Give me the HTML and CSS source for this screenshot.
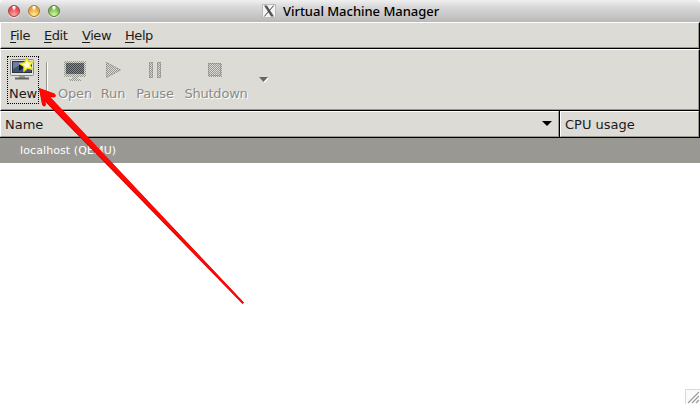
FILE: index.html
```
<!DOCTYPE html>
<html lang="en">
<head>
<meta charset="utf-8">
<title>Virtual Machine Manager</title>
<link rel="stylesheet" href="styles.css">
</head>
<body>
<div class="window">
  <header class="titlebar">
    <div class="lights"><span class="light red"></span><span class="light amber"></span><span class="light green"></span></div>
    <div class="title">
      <svg class="xlogo" width="14" height="14" viewBox="0 0 14 14"><rect x=".5" y=".5" width="13" height="13" fill="#f4f4f4" stroke="#bbb"/><path d="M2 1.500h3l7 11H9z" fill="#555"/><path d="M11.700 1.500 2.300 12.500" stroke="#444" stroke-width="1"/></svg>
      <span class="title-text">Virtual Machine Manager</span>
    </div>
  </header>
  <nav class="menubar">
    <span class="menu file"><u>F</u>ile</span><span class="menu edit"><u>E</u>dit</span><span class="menu view"><u>V</u>iew</span><span class="menu help"><u>H</u>elp</span>
  </nav>
  <div class="toolbar">
    <div class="tool new">
      <svg width="28" height="26" viewBox="0 0 28 26"><rect x="1.500" y="3.500" width="23" height="16" rx="1" fill="#e4e4e0" stroke="#8a8b86"/><rect x="3.500" y="5.500" width="19" height="11" fill="#3d5478" stroke="#2c323b"/><path d="M4 6h12L4 13z" fill="#6b809e"/><path d="M10 8l5 3.500-5 3.500z" fill="#17191c"/><path d="M10 20h6v2h-6z" fill="#9a9b96"/><path d="M6 22.500h14" stroke="#62635e" stroke-width="2"/><path d="M17.500 1.500l2.300 4.300 5-.5-3.400 3.900 2.200 4.600-4.900-1.600-4 3.500.2-5.200-4.500-2.700 5.300-1.300z" fill="#fff45c" stroke="#e8d800"/><path d="M18 5l1 2.500 2.500.2-2 1.800.6 2.200-2.300-1-1.800 1.200.2-2.200-1.800-1.400 2.500-.5z" fill="#fffde0"/></svg>
      <span>New</span>
    </div>
    <div class="separator"></div>
    <div class="tool disabled open">
      <svg width="28" height="26" viewBox="0 0 28 26"><defs><pattern id="dots" width="2" height="2" patternUnits="userSpaceOnUse"><path d="M0 0h1v1H0zM1 1h1v1H1z" fill="#3e4448"/></pattern><pattern id="pale" width="2" height="2" patternUnits="userSpaceOnUse"><path d="M0 0h1v1H0zM1 1h1v1H1z" fill="#96978f"/></pattern></defs><rect x="3" y="4" width="22" height="16" rx="1" fill="url(#pale)"/><rect x="5" y="6" width="18" height="11" fill="#858b8e"/><rect x="5" y="6" width="18" height="11" fill="url(#dots)"/><path d="M11 20h6v2h3v2H8v-2h3z" fill="url(#pale)"/></svg>
      <span>Open</span>
    </div>
    <div class="tool disabled run">
      <svg width="28" height="26" viewBox="0 0 28 26"><path d="M7 5l15 8-15 8z" fill="url(#pale)"/><path d="M7.500 5.500l14 7.500-14 7.500z" fill="none" stroke="#85867f" stroke-dasharray="1 1"/></svg>
      <span>Run</span>
    </div>
    <div class="tool disabled pause">
      <svg width="28" height="26" viewBox="0 0 28 26"><path d="M8 5h4v16H8zM16 5h4v16h-4z" fill="url(#pale)"/><path d="M8.500 5.500h3v15h-3zM16.500 5.500h3v15h-3z" fill="none" stroke="#85867f" stroke-dasharray="1 1"/></svg>
      <span>Pause</span>
    </div>
    <div class="tool disabled shutdown">
      <svg width="28" height="26" viewBox="0 0 28 26"><path d="M6 6h14v14H6z" fill="url(#pale)"/><path d="M6.500 6.500h12v12h-12z" fill="none" stroke="#85867f" stroke-dasharray="1 1"/></svg>
      <span>Shutdown</span>
    </div>
    <svg class="more" width="10" height="6" viewBox="0 0 10 6"><path d="M1 1h9L5.500 6z" fill="#fff"/><path d="M0 0h9L4.500 5z" fill="#686863"/></svg>
  </div>
  <div class="columns">
    <div class="column name"><span>Name</span><svg width="10" height="5" viewBox="0 0 10 5"><path d="M0 0h10L5 5z"/></svg></div>
    <div class="column cpu"><span>CPU usage</span></div>
  </div>
  <div class="host"><span>localhost (QEMU)</span></div>
  <main class="list"><svg class="grip" width="15" height="15" viewBox="0 0 15 15"><path d="M.5 15V.5H15" fill="#fafafa" stroke="#d9d9d9"/><path d="M3 14L14 3M7 14l7-7M11 14l3-3" stroke="#9a9a9a" stroke-width="1.200"/></svg></main>
  <svg class="arrow" width="700" height="404" viewBox="0 0 700 404"><path d="M39 88L54.500 94Q57 96.500 54 97.500L49.500 97 244 302.500 242.500 304 45 101.500 46 105Q44 108 42 104.500Z" fill="#d80000"/><path d="M39 88L54.500 93.500Q57 96 54 97L49.500 96 243.700 302.700 242.800 303.500 44.500 99.500 46 104.500Q44 107 42.500 104Z" fill="#ff0805"/></svg>
</div>
</body>
</html>
```
FILE: styles.css
```
* { box-sizing: border-box; }
body { margin: 0; background: #fff; font: 13px/16px "DejaVu Sans", sans-serif; color: #1c1c1c; }
svg { display: block; flex: none; }
.window { position: relative; width: 700px; height: 404px; overflow: hidden; display: flex; flex-direction: column; }
.titlebar { height: 22px; flex: none; display: flex; align-items: center; border-radius: 4px 4px 0 0; background: linear-gradient(#f0f0f0, #d9d9d9 30%, #b9b9b9); }
.lights { width: 262px; padding-left: 8px; display: flex; gap: 8px; }
.light { width: 12px; height: 12px; border-radius: 50%; border: 1px solid; box-shadow: 0 1px #eee; }
.red { border-color: #a24344; background: radial-gradient(ellipse at 50% 10%, #fff 0 10%, transparent 32%), radial-gradient(circle at 50% 90%, #ffaaa5, #e64b4e 65%); }
.amber { border-color: #a87934; background: radial-gradient(ellipse at 50% 10%, #fff 0 10%, transparent 32%), radial-gradient(circle at 50% 90%, #fff08d, #e5a33b 65%); }
.green { border-color: #577e3a; background: radial-gradient(ellipse at 50% 10%, #fff 0 10%, transparent 32%), radial-gradient(circle at 50% 90%, #d3ff9f, #77b54f 65%); }
.title { display: flex; align-items: center; gap: 7px; }
.title-text { font: 500 13px/18px "Noto Sans", sans-serif; letter-spacing: -.03px; white-space: nowrap; color: #000; }
.menubar, .toolbar, .column { background: #dcdbd5; border: 1px solid #fff; border-right-color: #989790; border-bottom-color: #989790; }
.menubar { height: 27px; flex: none; display: flex; padding: 5px 0 0 9px; border-bottom: 1px solid #000; border-right: 1px solid #000; }
.menu { letter-spacing: -.45px; }
.menu u { text-underline-offset: 2px; text-decoration-thickness: 1px; }
.file { width: 34px; }
.edit { width: 38px; }
.view { width: 43px; }
.toolbar { height: 62px; flex: none; display: flex; align-items: flex-start; padding: 6px 0 0 6px; border-right-color: #000; border-bottom-color: #000; }
.menubar, .toolbar { background-image: linear-gradient(#989790, #989790), linear-gradient(#989790, #989790); background-size: 100% 1px, 1px 100%; background-position: bottom, right; background-repeat: no-repeat; }
.tool { height: 48px; display: flex; flex-direction: column; align-items: center; padding-top: 1px; }
.tool span { margin-top: 3px; white-space: nowrap; }
.new { width: 32px; border: 1px dotted #000; padding-top: 0; letter-spacing: -.2px; }
.new svg { margin-top: -1px; }
.new span { margin-top: 4px; }
.separator { width: 2px; height: 38px; margin: 6px 9px 0 7px; border-left: 1px solid #96958f; border-right: 1px solid #fff; }
.disabled { color: #8c8b85; text-shadow: 1px 1px #fff; letter-spacing: -.15px; }
.open { width: 36px; }
.run { width: 24px; margin-left: 8px; }
.pause { width: 38px; margin-left: 11px; }
.shutdown { width: 62px; margin-left: 11px; letter-spacing: -.22px; }
.more { margin: 21px 0 0 12px; }
.columns { display: flex; height: 27px; flex: none; border-bottom: 1px solid #000; border-right: 1px solid #000; }
.column { display: flex; align-items: center; padding: 1px 6px 0 4px; }
.name { width: 559px; justify-content: space-between; }
.name svg { margin-top: -3px; }
.cpu { flex: 1; margin-left: 1px; position: relative; box-shadow: -1px 0 #000; }
.host { height: 25px; flex: none; background: #999892; color: #fff; font-size: 11px; line-height: 25px; padding-left: 20px; letter-spacing: .1px; }
.list { flex: 1; display: flex; justify-content: flex-end; align-items: flex-end; background: #fff; }
.arrow { position: absolute; left: 0; top: 0; pointer-events: none; }
```
